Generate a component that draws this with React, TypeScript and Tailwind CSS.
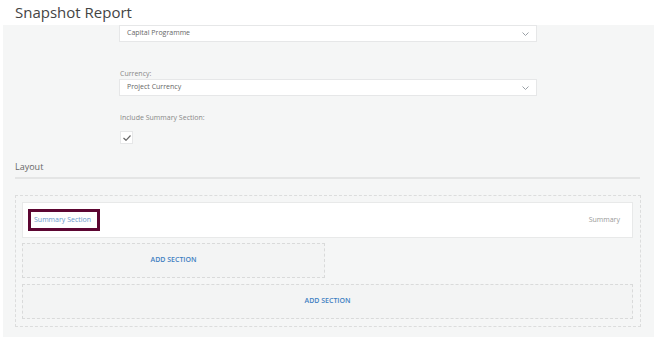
import React from 'react';

const Chevron = () => (
  <svg className="w-[7px] h-[4px]" viewBox="0 0 7 4" fill="none" stroke="#9aa0a6" strokeWidth={1}>
    <path d="M0.5 0.5L3.5 3.5L6.5 0.5" />
  </svg>
);

const Select = ({ value }: { value: string }) => (
  <div className="h-[17px] bg-white border border-[#e6e7e8] flex items-center justify-between pl-[7px] pr-[7px]">
    <span className="text-[7px] text-[#666]">{value}</span>
    <Chevron />
  </div>
);

export default function App() {
  return (
    <div className="w-[654px] h-[337px] bg-white overflow-hidden" style={{ fontFamily: '"Open Sans", sans-serif' }}>
      {/* Header */}
      <div className="h-[25px] flex items-center pl-[15px]">
        <span className="text-[15px] text-[#444] leading-none">Snapshot Report</span>
      </div>

      {/* Body */}
      <div className="ml-[3px] h-[312px] bg-[#f5f6f6] pl-[12px]">
        <div className="ml-[104px] w-[418px]">
          <Select value="Capital Programme" />
          <div className="mt-[27px] h-[10px] flex items-center pl-[1px] text-[7px] text-[#888]">Currency:</div>
          <Select value="Project Currency" />
          <div className="mt-[17px] h-[10px] flex items-center pl-[1px] text-[7px] text-[#888]">Include Summary Section:</div>
          <div className="mt-[8px] ml-[1px] w-[13px] h-[13px] bg-white border border-[#e6e7e8] flex items-center justify-center">
            <svg className="w-[8px] h-[6px]" viewBox="0 0 8 6" fill="none" stroke="#666" strokeWidth={1.2}>
              <path d="M0.5 3L3 5.3L7.5 0.5" />
            </svg>
          </div>
        </div>

        <div className="mt-[18px] h-[10px] flex items-center text-[9px] text-[#666]">Layout</div>
        <div className="mt-[5px] h-[2px] w-[625px] bg-[#e4e5e5]" />

        {/* Layout sections */}
        <div className="mt-[16px] w-[626px] h-[132px] border border-dashed border-[#dcdddd] pt-[6px] pl-[6px] pr-[7px]">
          <div className="h-[36px] bg-white border border-[#e8e9e9] flex items-center justify-between pl-[5px] pr-[12px]">
            <div className="h-[22px] w-[72px] border-[3px] border-[#5c0632] flex items-center pl-[3px]">
              <span className="text-[7px] text-[#6a98cc] whitespace-nowrap">Summary Section</span>
            </div>
            <span className="text-[7px] text-[#999]">Summary</span>
          </div>
          <div className="mt-[5px] h-[35px] w-[303px] border border-dashed border-[#d9dada] bg-[#f3f4f4] flex items-center justify-center">
            <span className="text-[7px] font-semibold text-[#3f7fc2] uppercase">Add Section</span>
          </div>
          <div className="mt-[6px] h-[35px] border border-dashed border-[#d9dada] bg-[#f3f4f4] flex items-center justify-center">
            <span className="text-[7px] font-semibold text-[#3f7fc2] uppercase">Add Section</span>
          </div>
        </div>
      </div>
    </div>
  );
}
